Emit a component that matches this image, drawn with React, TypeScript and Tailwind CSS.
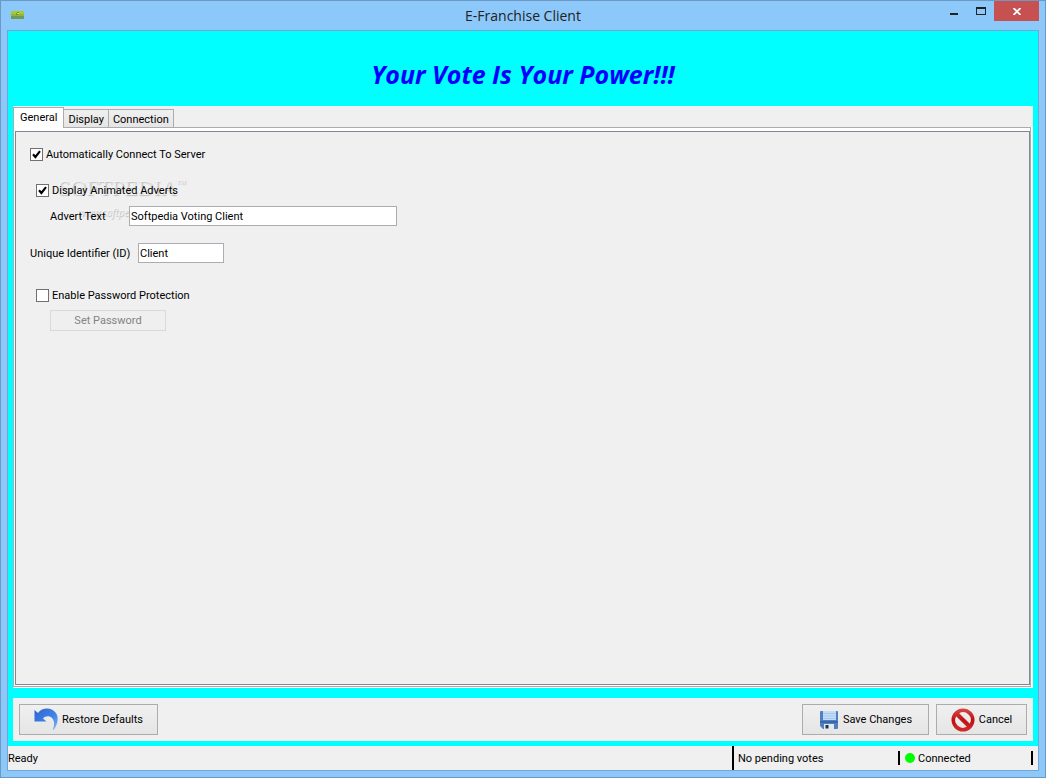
import React from "react";

const FONT = "font-['Roboto',sans-serif]";

function Tab({ label, active = false }: { label: string; active?: boolean }) {
  return (
    <button
      type="button"
      role="tab"
      aria-selected={active}
      className={
        active
          ? "relative z-10 -mb-px flex h-[21px] items-center border border-b-0 border-[#acacac] bg-white px-1.5"
          : "flex h-[18px] items-center border border-b-0 border-l-0 border-[#acacac] bg-gradient-to-b from-[#f0f0f0] to-[#e5e5e5] px-1 pt-0.5"
      }
    >
      {label}
    </button>
  );
}

function Check({ id, label, checked = false }: { id: string; label: string; checked?: boolean }) {
  return (
    <div className="flex items-center gap-[3px]">
      <span className="relative size-[13px]">
        <input
          id={id}
          type="checkbox"
          defaultChecked={checked}
          className="peer block size-[13px] appearance-none border border-[#707070] bg-white"
        />
        <svg viewBox="0 0 13 13" className="pointer-events-none absolute inset-0 hidden peer-checked:block">
          <path d="M3 6.2 L5.4 9 L10 3.2" fill="none" stroke="#000" strokeWidth="2.1" />
        </svg>
      </span>
      <label htmlFor={id} className="h-4 leading-[18px]">{label}</label>
    </div>
  );
}

const BTN =
  "flex h-[31px] items-center justify-center gap-1 border border-[#acacac] bg-gradient-to-b from-[#f0f0f0] to-[#e5e5e5]";

export default function App() {
  return (
    <div className={`flex min-h-screen flex-col border border-[#6d98c4] bg-[#8cc8fa] text-[11px] leading-4 text-black ${FONT}`}>
      <header className="grid h-[29px] grid-cols-[1fr_auto_1fr] items-start pr-1.5 pl-2.5">
        <svg viewBox="0 0 13 8" className="mt-2.5 h-2 w-[13px]" aria-hidden="true">
          <rect width="13" height="8" fill="#8fb83a" />
          <rect width="13" height="3" fill="#a5c83f" />
          <rect y="5" width="13" height="3" fill="#6d9a59" />
          <path d="M5 3 L7 1 L8 2 L6 4Z" fill="#3f6a20" />
          <path d="M6 2h2v1H6z" fill="#f0e000" />
        </svg>
        <h1 className="mt-[5px] mr-1 font-['Open_Sans',sans-serif] text-[14px] leading-5 text-[#222]">E-Franchise Client</h1>
        <div className="flex justify-end">
          <button type="button" aria-label="Minimize" className="flex h-5 w-[27px] items-start justify-center pt-3">
            <span className="h-0.5 w-2 bg-[#222]" />
          </button>
          <button type="button" aria-label="Maximize" className="flex h-5 w-[27px] items-start justify-center pt-1.5">
            <span className="h-2 w-2.5 border border-t-2 border-[#222]" />
          </button>
          <button type="button" aria-label="Close" className="flex h-5 w-[45px] items-center justify-center bg-[#c75050]">
            <svg viewBox="0 0 8 7" className="h-[7px] w-2">
              <path d="M0.5 0 L7.5 7 M7.5 0 L0.5 7" stroke="#fff" strokeWidth="1.8" />
            </svg>
          </button>
        </div>
      </header>

      <div className="mx-1.5 mb-1.5 flex flex-1 flex-col border border-[#74a5d3] bg-[#f0f0f0]">
        <main className="flex flex-1 flex-col bg-[#00ffff] px-[5px] pb-[5px]">
          <h2 className="flex h-[75px] items-center justify-center pt-2.5 font-['Open_Sans',sans-serif] text-[25px] font-bold text-[#0000ff] italic">
            Your Vote Is Your Power!!!
          </h2>

          <section className="flex flex-1 flex-col bg-[#f0f0f0] pt-px">
            <div role="tablist" className="flex h-5 items-end">
              <Tab label="General" active />
              <Tab label="Display" />
              <Tab label="Connection" />
            </div>
            <div className="flex flex-1 flex-col bg-white pr-0.5 pb-px">
              <div className="flex flex-1 flex-col border border-[#acacac] bg-white pt-[3px] pb-px pl-px">
                <div className="flex flex-1 flex-col items-start border border-[#828790] bg-[#f0f0f0] px-3.5 pt-3.5">
                  <Check id="auto" label="Automatically Connect To Server" checked />
                  <div className="relative mt-5 pl-1.5">
                    <div aria-hidden="true" className="pointer-events-none absolute -top-1.5 left-7 text-white/50 select-none">
                      <p className="flex items-start font-['Liberation_Serif',serif] text-[22px] leading-6 [text-shadow:1px_1px_1px_#bbb]">
                        SOFTPEDIA<span className="text-[6px] leading-3">TM</span>
                      </p>
                      <p className="pt-1 pl-5 font-['Noto_Sans',sans-serif] text-[10px] italic [text-shadow:1px_1px_1px_#bbb]">
                        www.softpedia.com
                      </p>
                    </div>
                    <div className="relative">
                      <Check id="adverts" label="Display Animated Adverts" checked />
                    </div>
                  </div>
                  <div className="relative mt-2 flex items-center pl-5">
                    <label htmlFor="advert-text" className="h-4 w-[79px] leading-[18px] whitespace-nowrap">Advert Text</label>
                    <input
                      id="advert-text"
                      defaultValue="Softpedia Voting Client"
                      className="h-5 w-[268px] border border-[#abadb3] bg-white px-px pt-px"
                    />
                  </div>
                  <div className="mt-[17px] flex items-center">
                    <label htmlFor="client-id" className="h-4 w-[108px] leading-[18px] whitespace-nowrap">Unique Identifier (ID)</label>
                    <input id="client-id" defaultValue="Client" className="h-5 w-[86px] border border-[#abadb3] bg-white px-px pt-px" />
                  </div>
                  <div className="mt-6 pl-1.5">
                    <Check id="password" label="Enable Password Protection" />
                  </div>
                  <button
                    type="button"
                    disabled
                    className="mt-[7px] ml-5 h-[21px] w-[116px] border border-[#d9d9d9] bg-[#efefef] pt-px text-[#838383]"
                  >
                    Set Password
                  </button>
                </div>
              </div>
            </div>
          </section>

          <div className="mt-2.5 flex h-[43px] items-center bg-[#f0f0f0] px-1.5">
            <button type="button" className={`${BTN} w-[139px]`}>
              <svg viewBox="0 0 24 24" className="size-6" aria-hidden="true">
                <defs>
                  <linearGradient id="undo" x1="0" y1="0" x2="1" y2="1">
                    <stop offset="0" stopColor="#2f62d0" />
                    <stop offset="0.6" stopColor="#3f86e8" />
                    <stop offset="1" stopColor="#8fb8ee" />
                  </linearGradient>
                </defs>
                <path d="M0.5 2 L4 5 C8 -0.5 17 -1 21.5 4.500 C25.5 9.500 23.5 17 19.5 22 L19 21.5 C21 16 20.5 10 15.5 8.500 C12.5 8 10.5 9 9 10.500 L12.5 13.5 L0.5 13.5Z" fill="url(#undo)" />
              </svg>
              Restore Defaults
            </button>
            <button type="button" className={`${BTN} ml-auto w-[127px]`}>
              <svg viewBox="0 0 20 20" className="size-5" aria-hidden="true">
                <path d="M2 1h16q1 0 1 1v16q0 1-1 1H4l-3-3V2q0-1 1-1z" fill="#4f80c2" />
                <path d="M4 1h13v9H4z" fill="#c5dcf8" />
                <path d="M4 3.5h13M4 6h13M4 8.5h13" stroke="#a5c6ef" />
                <path d="M1 11h18v2H1z" fill="#3b68aa" />
                <path d="M5 14h10v5H5z" fill="#e4e7ed" />
                <path d="M6.500 15h3v3.500h-3z" fill="#1d3054" />
              </svg>
              Save Changes
            </button>
            <button type="button" className={`${BTN} ml-[7px] w-[91px]`}>
              <svg viewBox="0 0 24 24" className="size-6" aria-hidden="true">
                <defs>
                  <linearGradient id="stop" x1="0" y1="0" x2="0" y2="1">
                    <stop offset="0" stopColor="#d84a4a" />
                    <stop offset="0.5" stopColor="#c01010" />
                    <stop offset="1" stopColor="#d62a2a" />
                  </linearGradient>
                </defs>
                <path
                  fill="url(#stop)"
                  fillRule="evenodd"
                  d="M12 0.500a11.500 11.500 0 1 0 0 23a11.500 11.500 0 1 0 0-23zM8.200 5.200L18.800 15.800A7.800 7.800 0 0 0 8.200 5.200zM5.200 8.200A7.800 7.800 0 0 0 15.800 18.800z"
                />
              </svg>
              Cancel
            </button>
          </div>
        </main>

        <footer className="flex h-6 items-center">
          <span className="flex-1 pt-0.5">Ready</span>
          <span className="flex h-6 w-[166px] items-center border-l-2 border-black pt-0.5 pl-1">No pending votes</span>
          <span className="flex h-3.5 w-[135px] items-center gap-[3px] border-x-2 border-black pl-[5px]">
            <span className="size-2.5 rounded-full bg-[#00ff00]" />
            <span className="pt-0.5">Connected</span>
          </span>
          <span className="w-[5px]" />
        </footer>
      </div>
    </div>
  );
}
